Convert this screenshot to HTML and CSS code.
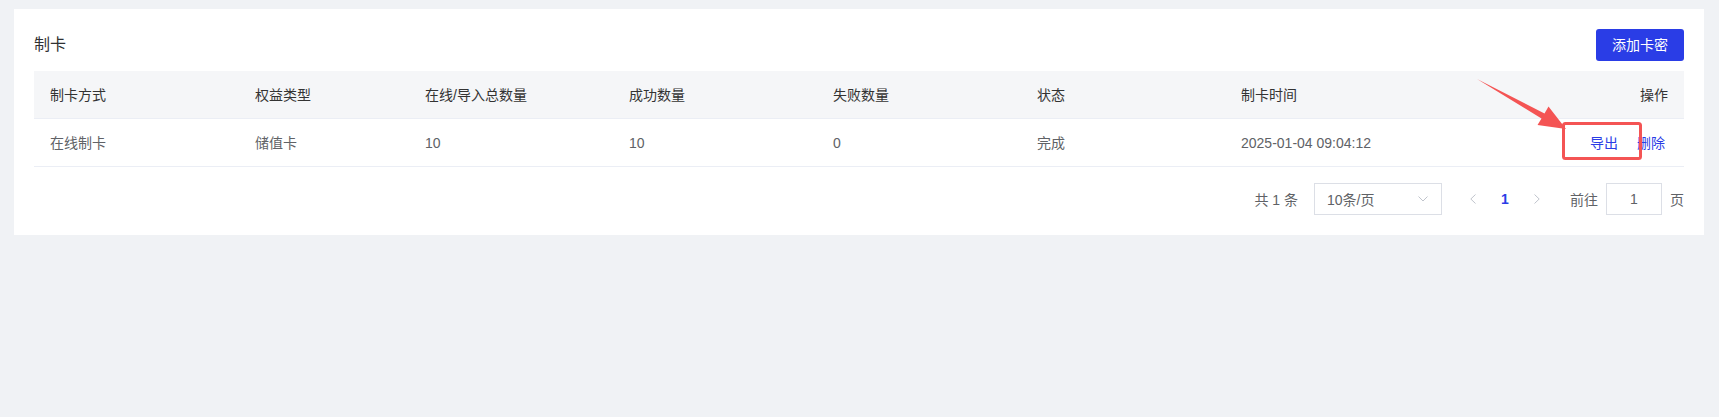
FILE: index.html
```html
<!DOCTYPE html>
<html lang="zh-CN">
<head>
<meta charset="utf-8">
<title>制卡</title>
<link rel="stylesheet" href="styles.css">
</head>
<body>
<div class="card">
  <div class="card-head">
    <div class="title">制卡</div>
    <button class="btn-primary">添加卡密</button>
  </div>
  <table class="table">
    <colgroup>
      <col style="width:205px"><col style="width:170px"><col style="width:204px"><col style="width:204px"><col style="width:204px"><col style="width:204px"><col>
    </colgroup>
    <thead>
      <tr>
        <th>制卡方式</th><th>权益类型</th><th>在线/导入总数量</th><th>成功数量</th><th>失败数量</th><th>状态</th><th>制卡时间</th><th class="right">操作</th>
      </tr>
    </thead>
    <tbody>
      <tr>
        <td>在线制卡</td><td>储值卡</td><td>10</td><td>10</td><td>0</td><td>完成</td><td>2025-01-04 09:04:12</td>
        <td class="right actions"><a class="link">导出</a><a class="link link-gap">删除</a></td>
      </tr>
    </tbody>
  </table>
  <div class="pager">
    <span class="total">共 1 条</span>
    <div class="select">
      <span>10条/页</span>
      <svg class="caret" width="10" height="6" viewBox="0 0 10 6"><polyline points="0.5,0.5 5,5 9.5,0.5" fill="none" stroke="#c0c4cc" stroke-width="1"/></svg>
    </div>
    <span class="nav"><svg width="6" height="10" viewBox="0 0 6 10"><polyline points="5.5,0.5 0.8,5 5.5,9.5" fill="none" stroke="#c0c4cc" stroke-width="1"/></svg></span>
    <span class="num">1</span>
    <span class="nav"><svg width="6" height="10" viewBox="0 0 6 10"><polyline points="0.5,0.5 5.2,5 0.5,9.5" fill="none" stroke="#c0c4cc" stroke-width="1"/></svg></span>
    <span class="goto">前往</span>
    <div class="jump">1</div>
    <span class="page">页</span>
  </div>
  <svg class="annot" width="1719" height="240" viewBox="0 0 1719 240">
    <polygon points="1477,79 1544.5,113.4 1548.5,106.5 1566,129 1537.5,125 1541.5,118.6" fill="#f45454"/>
    <rect x="1563.5" y="123.5" width="77" height="35" rx="2" fill="none" stroke="#f45454" stroke-width="3"/>
  </svg>
</div>
</body>
</html>
```
FILE: styles.css
```css
html, body {
  margin: 0;
  padding: 0;
  background: #f0f2f5;
}
body {
  padding: 9px 15px 0 14px;
  font-family: "Helvetica Neue", Helvetica, "Liberation Sans", "Noto Sans CJK SC", sans-serif;
  font-size: 14px;
  color: #606266;
}
.card {
  position: relative;
  background: #fff;
  padding: 20px 20px 20px 20px;
  width: 1650px;
}
.card-head {
  display: flex;
  justify-content: space-between;
  align-items: center;
  height: 32px;
  margin-bottom: 10px;
}
.title {
  font-size: 16px;
  color: #303133;
  line-height: 20px;
}
.btn-primary {
  width: 88px;
  height: 32px;
  border: none;
  border-radius: 3px;
  background: #2a3de6;
  color: #fff;
  font-family: inherit;
  font-size: 14px;
  padding: 0;
  line-height: 32px;
}
.table {
  width: 1650px;
  border-collapse: collapse;
  table-layout: fixed;
}
.table th, .table td {
  text-align: left;
  padding: 0 16px;
  height: 47px;
  line-height: 20px;
  border-bottom: 1px solid #ebeef5;
  white-space: nowrap;
}
.table th {
  background: #f5f6f8;
  color: #333;
  font-weight: normal;
}
.table td {
  color: #606266;
}
.table .right {
  text-align: right;
}
.table td.actions {
  padding-right: 19px;
}
.link {
  color: #2a3de6;
}
.link-gap {
  margin-left: 19px;
}
.pager {
  display: flex;
  justify-content: flex-end;
  align-items: center;
  margin-top: 16px;
  height: 32px;
  color: #606266;
}
.total {
  margin-right: 16px;
}
.select {
  box-sizing: border-box;
  width: 128px;
  height: 32px;
  border: 1px solid #dcdfe6;
  display: flex;
  align-items: center;
  justify-content: space-between;
  padding: 0 13px 0 12px;
  margin-right: 16px;
}
.caret {
  display: block;
}
.nav {
  width: 30px;
  height: 32px;
  display: flex;
  align-items: center;
  justify-content: center;
}
.num {
  width: 34px;
  text-align: center;
  color: #2a3de6;
  font-weight: bold;
}
.goto {
  margin-left: 18px;
  margin-right: 8px;
}
.jump {
  box-sizing: border-box;
  width: 56px;
  height: 32px;
  border: 1px solid #dcdfe6;
  display: flex;
  align-items: center;
  justify-content: center;
  color: #606266;
}
.page {
  margin-left: 8px;
}
.annot {
  position: absolute;
  left: -14px;
  top: -9px;
  pointer-events: none;
}
```
